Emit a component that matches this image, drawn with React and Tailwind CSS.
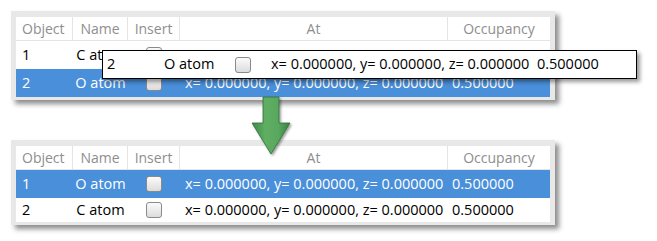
import React from "react";

const cols = "grid grid-cols-[57px_55px_52px_268px_102px]";

function Check({ className = "" }) {
  return (
    <span
      className={
        "inline-block shrink-0 w-[16px] h-[16px] rounded-[3px] border border-[#8a8a8a] bg-gradient-to-b from-[#fbfbfb] to-[#dcdcdc] " +
        className
      }
    />
  );
}

function Header() {
  return (
    <div className={cols + " h-[24px] text-[14px] text-[#8e8e8e] border-b border-[#e4e4e4]"}>
      <div className="flex items-center pl-[6px] border-r border-[#e4e4e4]">Object</div>
      <div className="flex items-center justify-center border-r border-[#e4e4e4]">Name</div>
      <div className="flex items-center justify-center border-r border-[#e4e4e4]">Insert</div>
      <div className="flex items-center justify-center border-r border-[#e4e4e4]">At</div>
      <div className="flex items-center justify-center">Occupancy</div>
    </div>
  );
}

function Row({ n, name, selected, h = "h-[28px]" }) {
  return (
    <div
      className={
        cols +
        " text-[14.5px] " +
        h +
        " " +
        (selected ? "bg-[#4a8fd9] text-white" : "bg-white text-black")
      }
    >
      <div className="flex items-center pl-[6px]">{n}</div>
      <div className="flex items-center justify-center whitespace-nowrap">{name}</div>
      <div className="flex items-center justify-center">
        <Check />
      </div>
      <div className="flex items-center pl-[5px] whitespace-nowrap overflow-hidden">
        x= 0.000000, y= 0.000000, z= 0.000000
      </div>
      <div className="flex items-center pl-[4px]">0.500000</div>
    </div>
  );
}

function Panel({ children, className = "" }) {
  return (
    <div
      className={
        "w-[544px] bg-[#e8e8e8] pt-[6px] px-[5px] pb-[3px] shadow-[4px_4px_5px_rgba(0,0,0,0.45)] " +
        className
      }
    >
      <div className="bg-white">{children}</div>
    </div>
  );
}

export default function App() {
  return (
    <div
      className="relative w-[657px] h-[241px] bg-white overflow-hidden leading-none"
      style={{ fontFamily: '"Open Sans", "Noto Sans", sans-serif' }}
    >
      <div className="flex flex-col pl-[11px] pt-[11px]">
        <Panel>
          <Header />
          <Row n="1" name="C atom" />
          <Row n="2" name="O atom" selected />
        </Panel>
        <Panel className="mt-[40px]">
          <Header />
          <Row n="1" name="O atom" selected />
          <Row n="2" name="C atom" h="h-[24px]" />
        </Panel>
      </div>

      {/* tooltip */}
      <div className="absolute left-[102px] top-[50px] w-[535px] h-[29px] bg-white border border-black shadow-[3px_3px_4px_rgba(0,0,0,0.4)] flex items-center text-[14.5px] text-black whitespace-nowrap">
        <span className="ml-[4px] w-[57px]">2</span>
        <span className="w-[71px]">O atom</span>
        <Check className="mr-[20px]" />
        <span>x= 0.000000, y= 0.000000, z= 0.000000&nbsp;&nbsp;0.500000</span>
      </div>

      {/* arrow */}
      <svg
        className="absolute left-[248px] top-[95px]"
        width="48"
        height="64"
        viewBox="0 0 48 64"
      >
        <defs>
          <linearGradient id="g" x1="0" x2="1" y1="0" y2="0">
            <stop offset="0" stopColor="#3f8a46" />
            <stop offset="0.35" stopColor="#5fae64" />
            <stop offset="0.7" stopColor="#58a85e" />
            <stop offset="1" stopColor="#3a7f40" />
          </linearGradient>
          <filter id="s" x="-30%" y="-30%" width="160%" height="160%">
            <feDropShadow dx="1.5" dy="1.5" stdDeviation="1.2" floodColor="#000" floodOpacity="0.4" />
          </filter>
        </defs>
        <path
          d="M15 2 H31 V28 H42 L23 59 L4 28 H15 Z"
          fill="url(#g)"
          stroke="#2f6e35"
          strokeWidth="0.8"
          filter="url(#s)"
        />
      </svg>
    </div>
  );
}
